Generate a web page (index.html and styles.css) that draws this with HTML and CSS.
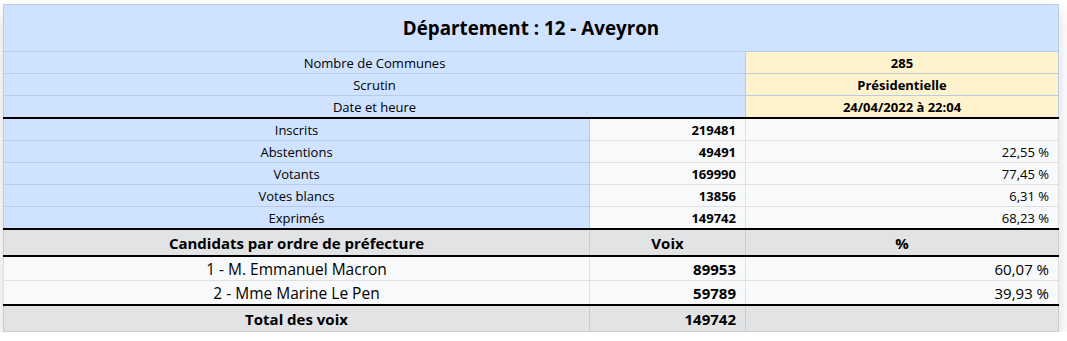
FILE: index.html
```html
<!DOCTYPE html>
<html lang="fr">
<head>
<meta charset="utf-8">
<title>Département : 12 - Aveyron</title>
<link rel="stylesheet" href="styles.css">
</head>
<body>
<div class="page">
<table class="results">
  <colgroup>
    <col class="c-label">
    <col class="c-value">
    <col class="c-pct">
  </colgroup>
  <thead>
    <tr class="title-row"><th colspan="3" class="blue title">Département : 12 - Aveyron</th></tr>
    <tr class="info-row"><td colspan="2" class="blue">Nombre de Communes</td><td class="yellow strong">285</td></tr>
    <tr class="info-row"><td colspan="2" class="blue">Scrutin</td><td class="yellow strong">Présidentielle</td></tr>
    <tr class="info-row"><td colspan="2" class="blue">Date et heure</td><td class="yellow strong">24/04/2022 à 22:04</td></tr>
  </thead>
  <tbody class="divider">
    <tr class="stat-row"><td class="blue">Inscrits</td><td class="light num strong">219481</td><td class="light num"></td></tr>
    <tr class="stat-row"><td class="blue">Abstentions</td><td class="light num strong">49491</td><td class="light num">22,55 %</td></tr>
    <tr class="stat-row"><td class="blue">Votants</td><td class="light num strong">169990</td><td class="light num">77,45 %</td></tr>
    <tr class="stat-row"><td class="blue">Votes blancs</td><td class="light num strong">13856</td><td class="light num">6,31 %</td></tr>
    <tr class="stat-row"><td class="blue">Exprimés</td><td class="light num strong">149742</td><td class="light num">68,23 %</td></tr>
  </tbody>
  <tbody class="divider">
    <tr class="head-row"><th class="grey">Candidats par ordre de préfecture</th><th class="grey">Voix</th><th class="grey">%</th></tr>
  </tbody>
  <tbody class="divider">
    <tr class="cand-row"><td class="light name">1 - M. Emmanuel Macron</td><td class="light num strong">89953</td><td class="light num">60,07 %</td></tr>
    <tr class="cand-row"><td class="light name">2 - Mme Marine Le Pen</td><td class="light num strong">59789</td><td class="light num">39,93 %</td></tr>
  </tbody>
  <tfoot class="divider">
    <tr class="total-row"><th class="grey">Total des voix</th><td class="grey num strong">149742</td><td class="grey"></td></tr>
  </tfoot>
</table>
</div>
</body>
</html>
```

FILE: styles.css
```css
html, body {
  margin: 0;
  padding: 0;
  background: #ffffff;
}

.page {
  padding: 4px 0 0 3px;
  font-family: "Open Sans", "Noto Sans", sans-serif;
  color: #000;
}

.results {
  width: 1055px;
  border-collapse: collapse;
  table-layout: fixed;
  font-size: 13px;
  box-shadow: 0 8px 16px rgba(0, 0, 0, 0.15);
  border: 1px solid #bacbe6;
}

.c-label { width: 586px; }
.c-value { width: 156px; }
.c-pct { width: 313px; }

.results th,
.results td {
  padding: 0 8px;
  text-align: center;
  border: 1px solid #bacbe6;
  line-height: 18px;
  white-space: nowrap;
}

.blue {
  background: #cfe2ff;
  font-weight: 400;
}
.results .blue { border-color: #bacbe6; }

.yellow { background: #fff3cd; }
.results .yellow { border-color: #bacbe6; }

.light { background: #f8f9fa; }
.results .light { border-color: #dfe0e1; }

.grey { background: #e2e3e5; }
.results .grey { border-color: #cbccce; }

.strong { font-weight: 700; }

.results .num { text-align: right; padding-right: 9px; }

.title-row th {
  height: 46px;
  font-size: 18.8px;
  font-weight: 700;
}

.info-row td { height: 21px; }
.stat-row td { height: 21px; }

.head-row th {
  height: 25px;
  font-size: 15px;
  font-weight: 700;
}

.cand-row td {
  height: 23px;
  font-size: 15px;
}
.cand-row .name { font-size: 15.5px; }

.total-row th,
.total-row td {
  height: 25px;
  font-size: 15px;
  font-weight: 700;
}

.results .divider {
  border-top: 2px solid #000;
}
.results .divider > tr:first-child > * {
  border-top: 2px solid #000;
}
```
